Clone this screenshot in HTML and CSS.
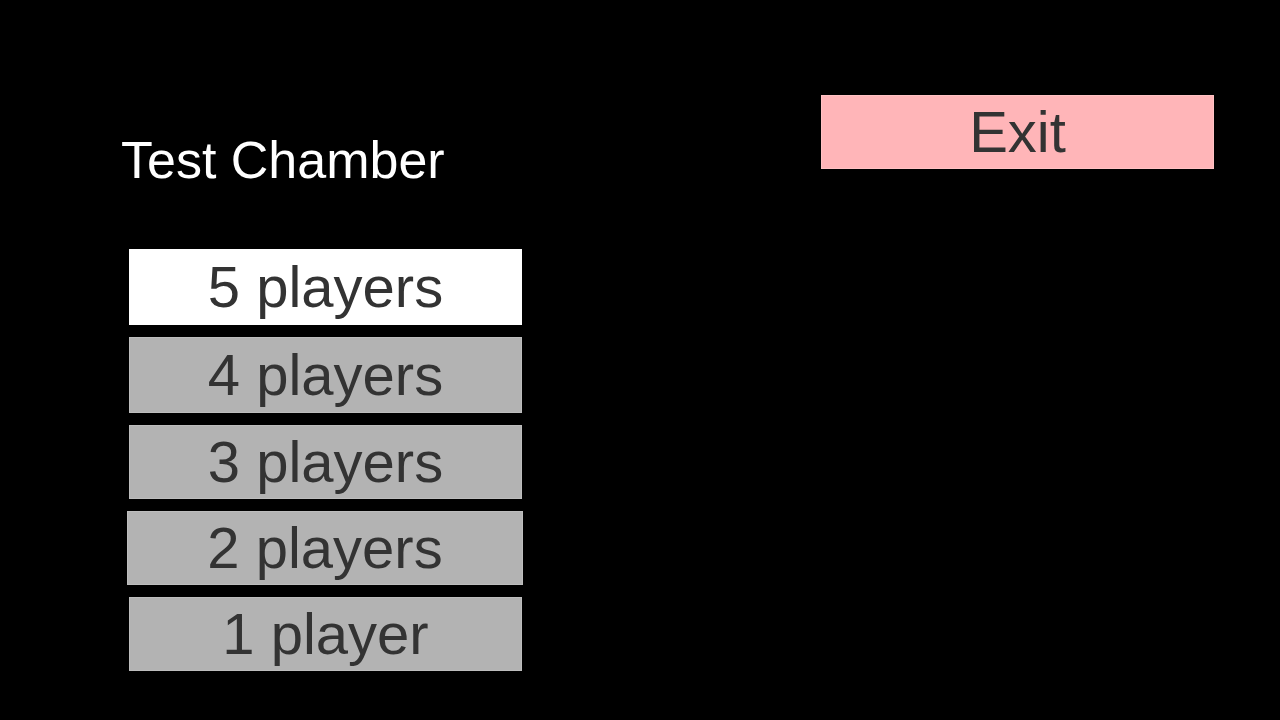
FILE: index.html
```html
<!DOCTYPE html>
<html lang="en">
<head>
<meta charset="utf-8">
<title>Test Chamber</title>
<link rel="stylesheet" href="styles.css">
</head>
<body>
<div class="screen">
  <div class="left">
    <h1 class="title">Test Chamber</h1>
    <div class="menu">
      <button class="btn btn-tall btn-selected">5 players</button>
      <button class="btn btn-tall">4 players</button>
      <button class="btn">3 players</button>
      <button class="btn btn-wide">2 players</button>
      <button class="btn">1 player</button>
    </div>
  </div>
  <div class="right">
    <button class="btn btn-exit">Exit</button>
  </div>
</div>
</body>
</html>
```

FILE: styles.css
```css
html, body {
  margin: 0;
  padding: 0;
  background: #000;
  width: 1280px;
  height: 720px;
  overflow: hidden;
}

.screen {
  display: flex;
  justify-content: space-between;
  width: 1280px;
  height: 720px;
  font-family: "Liberation Sans", Arial, sans-serif;
}

.left {
  display: flex;
  flex-direction: column;
  padding-left: 121px;
  padding-top: 130px;
}

.title {
  margin: 0;
  font-size: 52px;
  line-height: 60px;
  font-weight: normal;
  color: #fff;
}

.menu {
  display: flex;
  flex-direction: column;
  gap: 12px;
  margin-top: 59px;
  margin-left: 8px;
}

.btn {
  display: block;
  width: 393px;
  height: 74px;
  padding: 0;
  border: 1px solid #bdbdbd;
  background: #b3b3b3;
  color: #333;
  font-family: "Liberation Sans", Arial, sans-serif;
  font-size: 58px;
  line-height: 72px;
  text-align: center;
}

.btn-tall {
  height: 76px;
  line-height: 74px;
}

.btn-selected {
  background: #fff;
  border-color: #fff;
}

.btn-wide {
  width: 396px;
  margin-left: -2px;
}

.right {
  padding-top: 95px;
  padding-right: 66px;
}

.btn-exit {
  background: #ffb5b8;
  border-color: #ffc2c4;
  color: #333;
}
```
